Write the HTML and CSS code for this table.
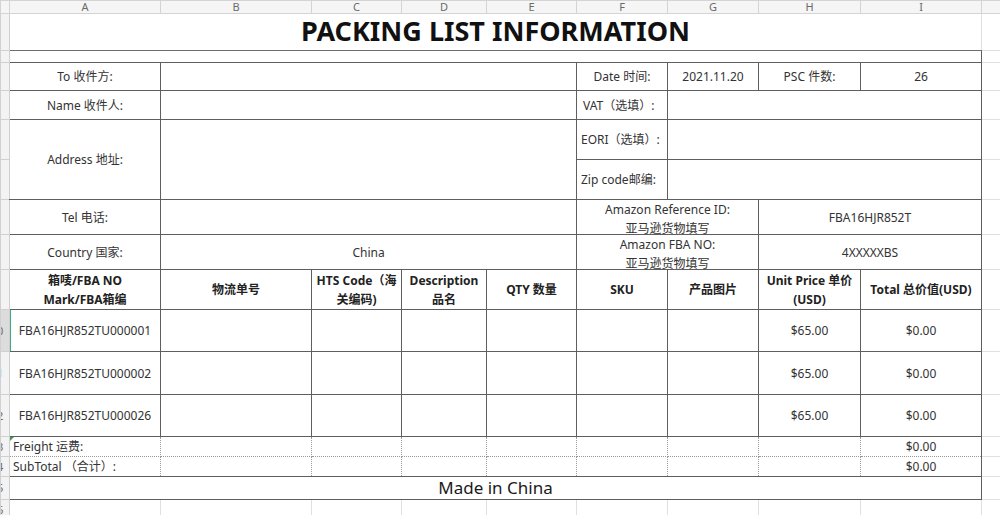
FILE: index.html
```html
<!DOCTYPE html>
<html lang="zh">
<head>
<meta charset="utf-8">
<title>Packing List</title>
<link rel="stylesheet" href="styles.css">
</head>
<body>
<table class="sheet">
  <colgroup>
    <col class="w-rh"><col class="w-a"><col class="w-b"><col class="w-c"><col class="w-d"><col class="w-e"><col class="w-f"><col class="w-g"><col class="w-h"><col class="w-i"><col class="w-j">
  </colgroup>
  <tr class="r-colhdr">
    <th class="corner"></th><th>A</th><th>B</th><th>C</th><th>D</th><th>E</th><th>F</th><th>G</th><th>H</th><th>I</th><th></th>
  </tr>
  <tr class="r-title">
    <td class="rh"><div class="rn">1</div></td>
    <td colspan="9" class="title">PACKING LIST INFORMATION</td>
    <td></td>
  </tr>
  <tr class="r-gap">
    <td class="rh"><div class="rn">2</div></td>
    <td colspan="9" class="b"></td>
    <td></td>
  </tr>
  <tr class="r-to">
    <td class="rh"><div class="rn">3</div></td>
    <td class="b">To 收件方:</td>
    <td colspan="4" class="b"></td>
    <td class="b">Date 时间:</td>
    <td class="b">2021.11.20</td>
    <td class="b">PSC 件数:</td>
    <td class="b">26</td>
    <td></td>
  </tr>
  <tr class="r-name">
    <td class="rh"><div class="rn">4</div></td>
    <td class="b">Name 收件人:</td>
    <td colspan="4" class="b"></td>
    <td class="b left">VAT（选填）:</td>
    <td colspan="3" class="b"></td>
    <td></td>
  </tr>
  <tr class="r-eori">
    <td class="rh"><div class="rn">5</div></td>
    <td rowspan="2" class="b first">Address 地址:</td>
    <td rowspan="2" colspan="4" class="b"></td>
    <td class="b left tight">EORI（选填）:</td>
    <td colspan="3" class="b"></td>
    <td></td>
  </tr>
  <tr class="r-zip">
    <td class="rh"><div class="rn">6</div></td>
    <td class="b left tight">Zip code邮编:</td>
    <td colspan="3" class="b"></td>
    <td></td>
  </tr>
  <tr class="r-tel">
    <td class="rh"><div class="rn">7</div></td>
    <td class="b">Tel 电话:</td>
    <td colspan="4" class="b"></td>
    <td colspan="2" class="b top"><div class="clip">Amazon Reference ID:<br>亚马逊货物填写</div></td>
    <td colspan="2" class="b">FBA16HJR852T</td>
    <td></td>
  </tr>
  <tr class="r-country">
    <td class="rh"><div class="rn">8</div></td>
    <td class="b">Country 国家:</td>
    <td colspan="4" class="b">China</td>
    <td colspan="2" class="b top"><div class="clip">Amazon FBA NO:<br>亚马逊货物填写</div></td>
    <td colspan="2" class="b">4XXXXXBS</td>
    <td></td>
  </tr>
  <tr class="r-head">
    <td class="rh"><div class="rn">9</div></td>
    <td class="b hd">箱唛/FBA NO<br>Mark/FBA箱编</td>
    <td class="b hd">物流单号</td>
    <td class="b hd">HTS Code（海<br>关编码)</td>
    <td class="b hd">Description<br>品名</td>
    <td class="b hd">QTY 数量</td>
    <td class="b hd">SKU</td>
    <td class="b hd">产品图片</td>
    <td class="b hd">Unit Price 单价<br>(USD)</td>
    <td class="b hd">Total 总价值(USD)</td>
    <td></td>
  </tr>
  <tr class="r-data1">
    <td class="rh sel"><div class="rn">10</div></td>
    <td class="b active">FBA16HJR852TU000001</td>
    <td class="b"></td><td class="b"></td><td class="b"></td><td class="b"></td><td class="b"></td><td class="b"></td>
    <td class="b">$65.00</td>
    <td class="b">$0.00</td>
    <td></td>
  </tr>
  <tr class="r-data2">
    <td class="rh"><div class="rn">11</div></td>
    <td class="b">FBA16HJR852TU000002</td>
    <td class="b"></td><td class="b"></td><td class="b"></td><td class="b"></td><td class="b"></td><td class="b"></td>
    <td class="b">$65.00</td>
    <td class="b">$0.00</td>
    <td></td>
  </tr>
  <tr class="r-data3">
    <td class="rh"><div class="rn">12</div></td>
    <td class="b">FBA16HJR852TU000026</td>
    <td class="b"></td><td class="b"></td><td class="b"></td><td class="b"></td><td class="b"></td><td class="b"></td>
    <td class="b">$65.00</td>
    <td class="b">$0.00</td>
    <td></td>
  </tr>
  <tr class="r-sum">
    <td class="rh"><div class="rn">13</div></td>
    <td class="d left flag">Freight 运费:</td>
    <td class="d"></td><td class="d"></td><td class="d"></td><td class="d"></td><td class="d"></td><td class="d"></td><td class="d"></td>
    <td class="d end">$0.00</td>
    <td></td>
  </tr>
  <tr class="r-sum">
    <td class="rh"><div class="rn">14</div></td>
    <td class="d left">SubTotal （合计）:</td>
    <td class="d"></td><td class="d"></td><td class="d"></td><td class="d"></td><td class="d"></td><td class="d"></td><td class="d"></td>
    <td class="d end">$0.00</td>
    <td></td>
  </tr>
  <tr class="r-made">
    <td class="rh"><div class="rn">15</div></td>
    <td colspan="9" class="b made">Made in China</td>
    <td></td>
  </tr>
  <tr class="r-empty">
    <td class="rh"><div class="rn">16</div></td>
    <td></td><td></td><td></td><td></td><td></td><td></td><td></td><td></td><td></td><td></td>
  </tr>
</table>
</body>
</html>
```
FILE: styles.css
```css
html, body {
  margin: 0;
  padding: 0;
  background: #ffffff;
  overflow: hidden;
}

body {
  width: 1000px;
  height: 515px;
  font-family: "Noto Sans", "Noto Sans CJK SC", sans-serif;
  font-size: 12px;
  color: #333333;
}

.sheet {
  border-collapse: collapse;
  table-layout: fixed;
  width: 1030px;
}

.w-rh { width: 9px; }
.w-a { width: 151px; }
.w-b { width: 151px; }
.w-c { width: 90px; }
.w-d { width: 85px; }
.w-e { width: 90px; }
.w-f { width: 91px; }
.w-g { width: 91px; }
.w-h { width: 102px; }
.w-i { width: 121px; }
.w-j { width: 50px; }

.sheet td, .sheet th {
  border: 1px solid #e0e0e0;
  padding: 0;
  text-align: center;
  vertical-align: middle;
  overflow: hidden;
  white-space: nowrap;
  line-height: 19px;
}

/* column header */
.r-colhdr { height: 12px; }
.sheet th {
  background: #f5f5f5;
  border-color: #d4d4d4;
  color: #6a6a6a;
  font-weight: normal;
  font-size: 11px;
  line-height: 11px;
  vertical-align: bottom;
  padding-bottom: 1px;
}

/* row header */
.sheet .rh {
  background: #f3f3f3;
  border-color: #d0d0d0;
  color: #6a6a6a;
  font-size: 11px;
  line-height: 10px;
}
.sheet .rh.sel { background: #dcdcdc; }
.rn {
  width: 40px;
  height: 10px;
  margin-left: -24px;
  text-align: center;
}

/* row heights */
.r-title { height: 37px; }
.r-gap { height: 12px; }
.r-to { height: 28px; }
.r-name { height: 29px; }
.r-eori { height: 40px; }
.r-zip { height: 40px; }
.r-tel { height: 35px; }
.r-country { height: 35px; }
.r-head { height: 40px; }
.r-data1 { height: 42px; }
.r-data2 { height: 43px; }
.r-data3 { height: 42px; }
.r-sum { height: 20px; }
.r-made { height: 23px; }
.r-empty { height: 20px; }

/* form cells */
.sheet .b {
  border: 1px solid #5e5e5e;
}
.sheet .b.first {
  border-left-color: #d0d0d0;
}
.sheet .title {
  border-bottom: 1px solid #6e6e6e;
  font-size: 27px;
  font-weight: bold;
  color: #111111;
  line-height: 30px;
  padding-bottom: 2px;
}
.sheet .left {
  text-align: left;
  padding-left: 6px;
}
.sheet .left.tight { padding-left: 4px; }
.sheet .top { vertical-align: top; }
.clip {
  height: 34px;
  overflow: hidden;
}
.sheet .hd {
  font-weight: bold;
  color: #222222;
}
.sheet .active {
  box-shadow: inset 1px 0 0 #3fae7f;
}
.sheet .made {
  font-size: 17px;
  color: #1a1a1a;
  line-height: 20px;
}

/* dotted summary rows */
.sheet .d {
  border: 1px dotted #9a9a9a;
  line-height: 16px;
}
.sheet .d.left { padding-left: 3px; }
.sheet .d.end { border-right: 1px solid #5e5e5e; }
.sheet .flag { position: relative; }
.sheet .flag::before {
  content: "";
  position: absolute;
  left: 0;
  top: 0;
  border-top: 4px solid #3c9b5a;
  border-right: 4px solid transparent;
}
```
